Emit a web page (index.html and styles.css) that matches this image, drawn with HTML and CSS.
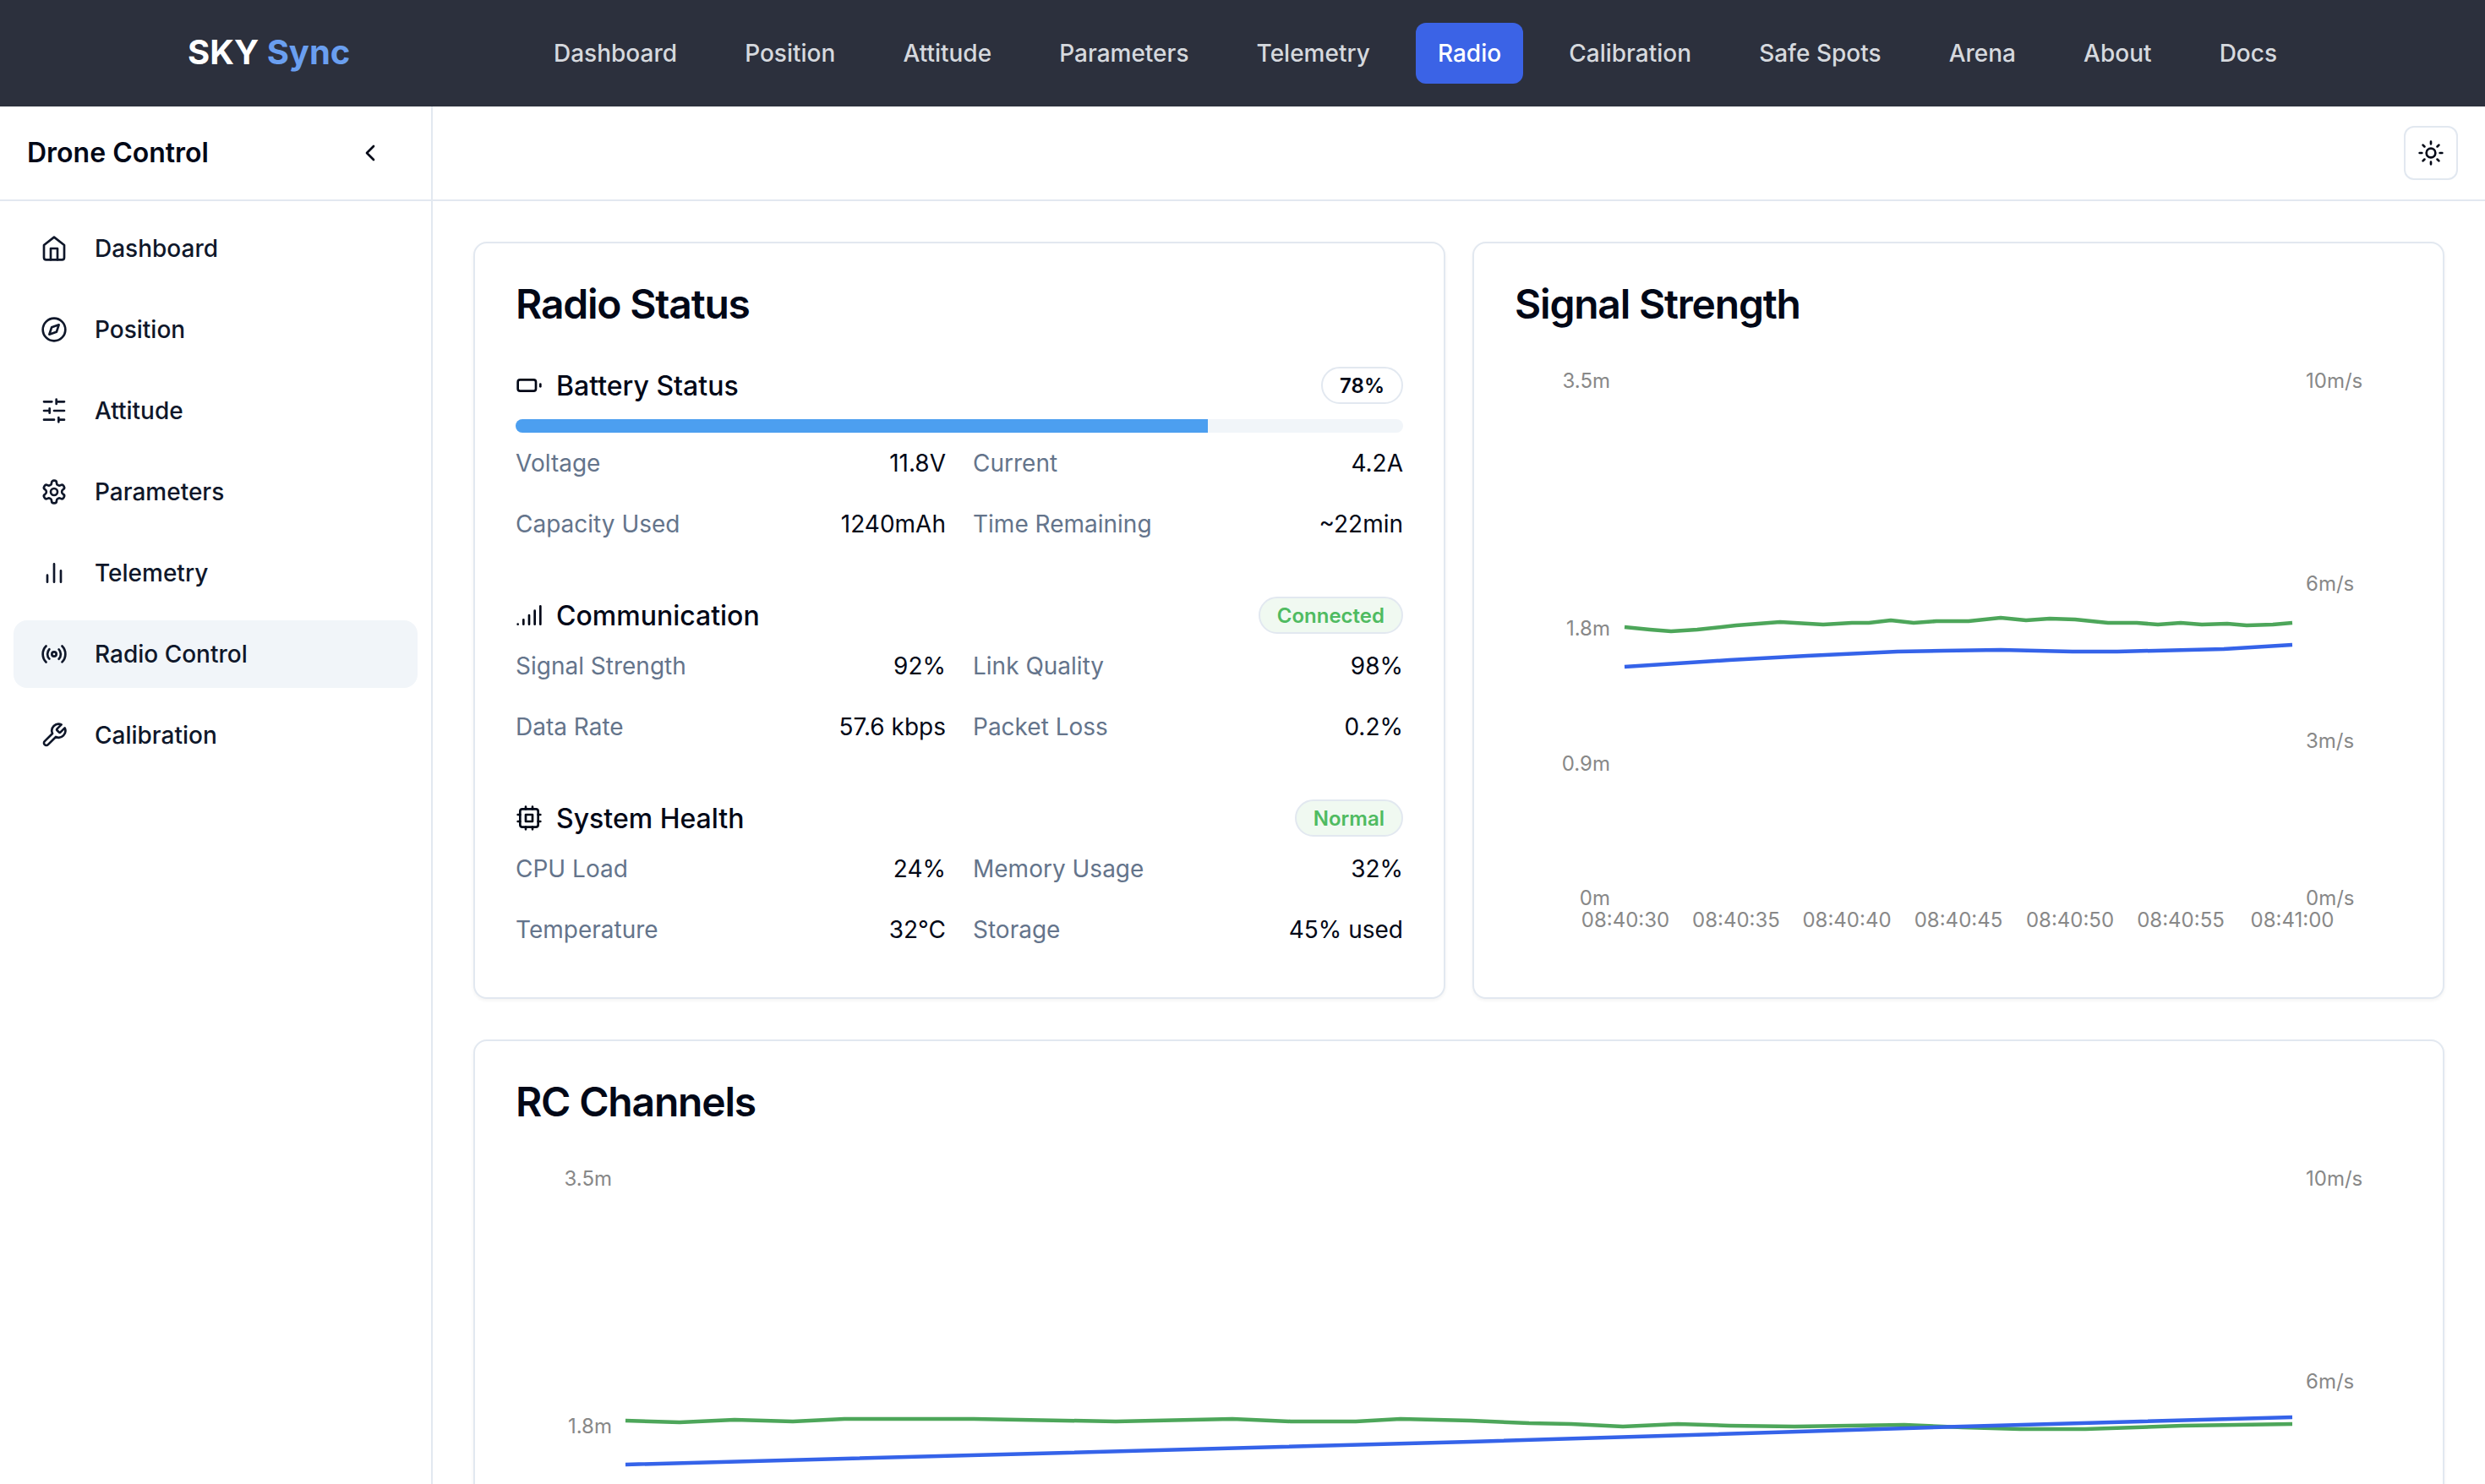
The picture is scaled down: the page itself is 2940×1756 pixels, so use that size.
FILE: index.html
```html
<!DOCTYPE html>
<html lang="en">
  <head>
    <title>SKY Sync - Radio Control</title>
    <meta charset="UTF-8">
    <meta name="viewport" content="width=device-width, initial-scale=1.0">
    <link rel="stylesheet" href="styles.css">
  </head>

  <body>
    <header class="topnav">
      <div class="logo">SKY <span class="logo-accent">Sync</span></div>
      <nav class="topnav-links">
        <a class="topnav-link">Dashboard</a>
        <a class="topnav-link">Position</a>
        <a class="topnav-link">Attitude</a>
        <a class="topnav-link">Parameters</a>
        <a class="topnav-link">Telemetry</a>
        <a class="topnav-link active">Radio</a>
        <a class="topnav-link">Calibration</a>
        <a class="topnav-link">Safe Spots</a>
        <a class="topnav-link">Arena</a>
        <a class="topnav-link">About</a>
        <a class="topnav-link">Docs</a>
      </nav>
    </header>

    <div class="shell">
      <aside class="sidebar">
        <div class="sidebar-head">
          <span class="sidebar-title">Drone Control</span>
          <svg class="icon chevron" viewBox="0 0 24 24"><path d="m15 18-6-6 6-6"/></svg>
        </div>
        <div class="side-items">
          <a class="side-item">
            <svg class="icon" viewBox="0 0 24 24"><path d="m3 9 9-7 9 7v11a2 2 0 0 1-2 2H5a2 2 0 0 1-2-2z"/><polyline points="9 22 9 12 15 12 15 22"/></svg>
            Dashboard
          </a>
          <a class="side-item">
            <svg class="icon" viewBox="0 0 24 24"><circle cx="12" cy="12" r="10"/><polygon points="16.24 7.76 14.12 14.12 7.76 16.24 9.88 9.88 16.24 7.76"/></svg>
            Position
          </a>
          <a class="side-item">
            <svg class="icon" viewBox="0 0 24 24"><path d="M21 4h-7M10 4H3M21 12h-9M8 12H3M21 20h-5M12 20H3M14 2v4M8 10v4M16 18v4"/></svg>
            Attitude
          </a>
          <a class="side-item">
            <svg class="icon" viewBox="0 0 24 24"><path d="M12.22 2h-.44a2 2 0 0 0-2 2v.18a2 2 0 0 1-1 1.73l-.43.25a2 2 0 0 1-2 0l-.15-.08a2 2 0 0 0-2.73.73l-.22.38a2 2 0 0 0 .73 2.73l.15.1a2 2 0 0 1 1 1.72v.51a2 2 0 0 1-1 1.74l-.15.09a2 2 0 0 0-.73 2.73l.22.38a2 2 0 0 0 2.73.73l.15-.08a2 2 0 0 1 2 0l.43.25a2 2 0 0 1 1 1.73V20a2 2 0 0 0 2 2h.44a2 2 0 0 0 2-2v-.18a2 2 0 0 1 1-1.73l.43-.25a2 2 0 0 1 2 0l.15.08a2 2 0 0 0 2.73-.73l.22-.39a2 2 0 0 0-.73-2.73l-.15-.08a2 2 0 0 1-1-1.74v-.5a2 2 0 0 1 1-1.74l.15-.09a2 2 0 0 0 .73-2.73l-.22-.38a2 2 0 0 0-2.73-.73l-.15.08a2 2 0 0 1-2 0l-.43-.25a2 2 0 0 1-1-1.73V4a2 2 0 0 0-2-2z"/><circle cx="12" cy="12" r="3"/></svg>
            Parameters
          </a>
          <a class="side-item">
            <svg class="icon" viewBox="0 0 24 24"><path d="M18 20V10M12 20V4M6 20v-6"/></svg>
            Telemetry
          </a>
          <a class="side-item active">
            <svg class="icon" viewBox="0 0 24 24"><circle cx="12" cy="12" r="2"/><path d="M4.9 19.1C1 15.2 1 8.8 4.9 4.9M7.8 16.2c-2.3-2.3-2.3-6.1 0-8.5M16.2 7.8c2.3 2.3 2.3 6.1 0 8.5M19.1 4.9C23 8.8 23 15.1 19.1 19"/></svg>
            Radio Control
          </a>
          <a class="side-item">
            <svg class="icon" viewBox="0 0 24 24"><path d="M14.7 6.3a1 1 0 0 0 0 1.4l1.6 1.6a1 1 0 0 0 1.4 0l3.77-3.77a6 6 0 0 1-7.94 7.94l-6.91 6.91a2.12 2.12 0 0 1-3-3l6.91-6.91a6 6 0 0 1 7.94-7.94l-3.76 3.76z"/></svg>
            Calibration
          </a>
        </div>
      </aside>

      <div class="content">
        <div class="toolbar">
          <button class="theme-btn">
            <svg class="icon" viewBox="0 0 24 24"><circle cx="12" cy="12" r="4"/><path d="M12 2v2M12 20v2M4.93 4.93l1.41 1.41M17.66 17.66l1.41 1.41M2 12h2M20 12h2M6.34 17.66l-1.41 1.41M19.07 4.93l-1.41 1.41"/></svg>
          </button>
        </div>

        <main class="cards">
          <section class="card">
            <h2 class="card-title">Radio Status</h2>

            <div class="status-block">
              <div class="status-head">
                <h3 class="status-name">
                  <svg class="icon" viewBox="0 0 24 24"><rect x="2" y="7" width="16" height="10" rx="2" ry="2"/><path d="M22 11v2"/></svg>
                  Battery Status
                </h3>
                <span class="pill">78%</span>
              </div>
              <div class="progress"><div class="progress-fill" style="width: 78%"></div></div>
              <div class="stats">
                <div class="stat"><span class="stat-label">Voltage</span><span class="stat-value">11.8V</span></div>
                <div class="stat"><span class="stat-label">Current</span><span class="stat-value">4.2A</span></div>
                <div class="stat"><span class="stat-label">Capacity Used</span><span class="stat-value">1240mAh</span></div>
                <div class="stat"><span class="stat-label">Time Remaining</span><span class="stat-value">~22min</span></div>
              </div>
            </div>

            <div class="status-block">
              <div class="status-head">
                <h3 class="status-name">
                  <svg class="icon" viewBox="0 0 24 24"><path d="M2 20h.01M7 20v-4M12 20v-8M17 20V8M22 4v16"/></svg>
                  Communication
                </h3>
                <span class="pill pill-ok">Connected</span>
              </div>
              <div class="stats">
                <div class="stat"><span class="stat-label">Signal Strength</span><span class="stat-value">92%</span></div>
                <div class="stat"><span class="stat-label">Link Quality</span><span class="stat-value">98%</span></div>
                <div class="stat"><span class="stat-label">Data Rate</span><span class="stat-value">57.6 kbps</span></div>
                <div class="stat"><span class="stat-label">Packet Loss</span><span class="stat-value">0.2%</span></div>
              </div>
            </div>

            <div class="status-block">
              <div class="status-head">
                <h3 class="status-name">
                  <svg class="icon" viewBox="0 0 24 24"><rect x="4" y="4" width="16" height="16" rx="2"/><rect x="9" y="9" width="6" height="6"/><path d="M15 2v2M15 20v2M2 15h2M2 9h2M20 15h2M20 9h2M9 2v2M9 20v2"/></svg>
                  System Health
                </h3>
                <span class="pill pill-ok">Normal</span>
              </div>
              <div class="stats">
                <div class="stat"><span class="stat-label">CPU Load</span><span class="stat-value">24%</span></div>
                <div class="stat"><span class="stat-label">Memory Usage</span><span class="stat-value">32%</span></div>
                <div class="stat"><span class="stat-label">Temperature</span><span class="stat-value">32°C</span></div>
                <div class="stat"><span class="stat-label">Storage</span><span class="stat-value">45% used</span></div>
              </div>
            </div>
          </section>

          <section class="card">
            <h2 class="card-title">Signal Strength</h2>
            <svg class="chart" viewBox="0 0 1050 700" width="1050" height="700">
              <polyline class="line-green" points="130,310 160,313 185,315 216,313 262,308 314,304 365,307 399,305 419,305 445,302 472,305 499,303 537,303 575,299 605,302 633,300 663,301 702,305 736,305 761,307 788,305 813,307 843,306 866,308 897,307 920,305"/>
              <polyline class="line-blue" points="130,357 254,349 346,344 453,339 507,338 575,337 660,339 713,339 839,336 920,331"/>
              <g class="tick-left">
                <text x="113" y="27">3.5m</text>
                <text x="113" y="320">1.8m</text>
                <text x="113" y="480">0.9m</text>
                <text x="113" y="639">0m</text>
              </g>
              <g class="tick-right">
                <text x="936" y="27">10m/s</text>
                <text x="936" y="267">6m/s</text>
                <text x="936" y="453">3m/s</text>
                <text x="936" y="639">0m/s</text>
              </g>
              <g class="tick-bottom">
                <text x="131" y="665">08:40:30</text>
                <text x="262" y="665">08:40:35</text>
                <text x="393" y="665">08:40:40</text>
                <text x="525" y="665">08:40:45</text>
                <text x="657" y="665">08:40:50</text>
                <text x="788" y="665">08:40:55</text>
                <text x="920" y="665">08:41:00</text>
              </g>
            </svg>
          </section>

          <section class="card card-wide">
            <h2 class="card-title">RC Channels</h2>
            <svg class="chart" viewBox="0 0 2232 700" width="2232" height="700">
              <polyline class="line-green" points="130,305 194,307 259,304 328,306 389,303 466,303 542,303 710,306 848,303 917,306 994,306 1047,303 1130,305 1199,308 1249,309 1310,312 1375,309 1436,311 1513,312 1643,310 1712,313 1780,315 1857,315 1972,311 2102,309"/>
              <polyline class="line-blue" points="130,357 1130,330 1711,312 2102,301"/>
              <g class="tick-left">
                <text x="114" y="27">3.5m</text>
                <text x="114" y="320">1.8m</text>
              </g>
              <g class="tick-right">
                <text x="2118" y="27">10m/s</text>
                <text x="2118" y="267">6m/s</text>
              </g>
            </svg>
          </section>
        </main>
      </div>
    </div>
  </body>
</html>
```

FILE: styles.css
```css
* {
  box-sizing: border-box;
}

html, body {
  height: 100%;
}

body {
  margin: 0;
  overflow: hidden;
  display: flex;
  flex-direction: column;
  background-color: #fff;
  color: #020817;
  font-family: "Inter", "Liberation Sans", sans-serif;
}

.icon {
  width: 32px;
  height: 32px;
  flex-shrink: 0;
  fill: none;
  stroke: currentColor;
  stroke-width: 2;
  stroke-linecap: round;
  stroke-linejoin: round;
}

/* top bar */
.topnav {
  height: 126px;
  flex-shrink: 0;
  display: flex;
  align-items: center;
  padding-left: 222px;
  background-color: #2c303d;
}

.logo {
  width: 407px;
  margin-bottom: 3px;
  font-size: 40px;
  font-weight: 700;
  color: #fff;
}

.logo-accent {
  color: #6a9ff0;
}

.topnav-links {
  display: flex;
  align-items: center;
  gap: 28.1px;
}

.topnav-link {
  height: 72px;
  padding: 0 26px;
  display: flex;
  align-items: center;
  border-radius: 12px;
  font-size: 28px;
  font-weight: 500;
  color: #d6d9de;
}

.topnav-link.active {
  background-color: #3b63e6;
  color: #fff;
}

/* sidebar */
.shell {
  flex: 1;
  min-height: 0;
  display: flex;
}

.sidebar {
  width: 512px;
  flex-shrink: 0;
  border-right: 2px solid #e2e8f0;
}

.sidebar-head {
  height: 112px;
  padding: 0 32px;
  display: flex;
  align-items: center;
  justify-content: space-between;
  border-bottom: 2px solid #e2e8f0;
}

.sidebar-title {
  margin-bottom: 2px;
  font-size: 32px;
  font-weight: 600;
}

.chevron {
  margin-right: 24px;
}

.side-items {
  padding: 16px;
  display: flex;
  flex-direction: column;
  gap: 16px;
}

.side-item {
  height: 80px;
  padding: 0 32px;
  display: flex;
  align-items: center;
  gap: 32px;
  border-radius: 16px;
  font-size: 28px;
  font-weight: 500;
  color: #0f172a;
}

.side-item.active {
  background-color: #f1f5f9;
}

/* main area */
.content {
  flex: 1;
  min-width: 0;
  overflow: hidden;
}

.toolbar {
  height: 112px;
  padding: 0 32px;
  display: flex;
  align-items: center;
  justify-content: flex-end;
  border-bottom: 2px solid #e2e8f0;
}

.theme-btn {
  width: 64px;
  height: 64px;
  padding: 0;
  display: flex;
  align-items: center;
  justify-content: center;
  border: 2px solid #e2e8f0;
  border-radius: 12px;
  background-color: #fff;
  color: #020817;
}

.cards {
  padding: 48px;
  display: grid;
  grid-template-columns: 1fr 1fr;
  column-gap: 32px;
  row-gap: 48px;
}

.card {
  padding: 48px;
  border: 2px solid #e2e8f0;
  border-radius: 16px;
  background-color: #fff;
  box-shadow: 0 2px 4px rgba(0, 0, 0, 0.05);
}

.card-wide {
  grid-column: span 2;
}

.card-title {
  margin: 0 0 48px;
  font-size: 48px;
  line-height: 48px;
  font-weight: 600;
  letter-spacing: -1.2px;
}

.chart {
  display: block;
}

.chart text {
  font-size: 24px;
  fill: #888;
}

.tick-left text {
  text-anchor: end;
}

.tick-bottom text {
  text-anchor: middle;
}

.line-green, .line-blue {
  fill: none;
  stroke-width: 4.5;
  stroke-linejoin: round;
}

.line-green {
  stroke: #4da65a;
}

.line-blue {
  stroke: #3563e9;
}

/* radio status */
.status-block {
  padding-top: 2px;
}

.status-block + .status-block {
  margin-top: 64px;
}

.status-head {
  margin-bottom: 18px;
  display: flex;
  align-items: center;
  justify-content: space-between;
}

.status-name {
  margin: 0;
  display: flex;
  align-items: center;
  gap: 16px;
  font-size: 32px;
  font-weight: 500;
}

.pill {
  height: 44px;
  padding: 0 20px;
  display: flex;
  align-items: center;
  border: 2px solid #e2e8f0;
  border-radius: 22px;
  font-size: 24px;
  font-weight: 600;
}

.pill-ok {
  background-color: #f0f9f1;
  color: #4fbb61;
}

.progress {
  height: 16px;
  margin-bottom: 16px;
  overflow: hidden;
  border-radius: 8px;
  background-color: #f1f5f9;
}

.progress-fill {
  height: 100%;
  background-color: #4c9ff0;
}

.stats {
  display: grid;
  grid-template-columns: 1fr 1fr;
  gap: 32px;
}

.stat {
  display: flex;
  justify-content: space-between;
  font-size: 28px;
  line-height: 40px;
}

.stat-label {
  color: #64748b;
}
```
